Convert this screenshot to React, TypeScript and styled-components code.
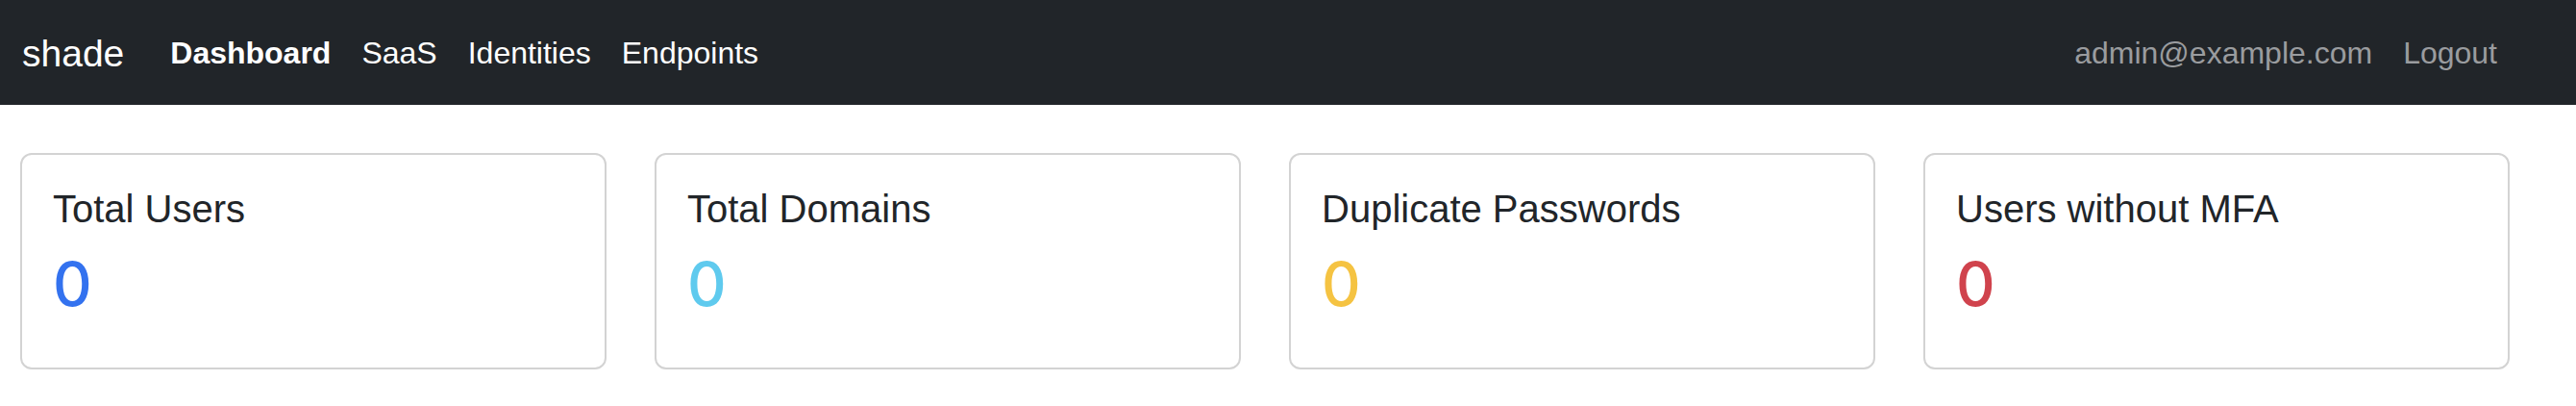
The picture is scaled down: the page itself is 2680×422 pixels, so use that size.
import React from "react";
import styled, { createGlobalStyle } from "styled-components";

const GlobalStyle = createGlobalStyle`
  html, body {
    margin: 0;
    padding: 0;
    background: #ffffff;
    font-family: "Liberation Sans", Arial, Helvetica, sans-serif;
    color: #212529;
  }
  * { box-sizing: border-box; }
`;

const NavBar = styled.nav`
  height: 109px;
  background: #212529;
  display: flex;
  align-items: center;
  padding: 0 66px 0 23px;
`;

const Brand = styled.a`
  font-size: 39px;
  line-height: 60px;
  color: #ffffff;
  text-decoration: none;
  margin-right: 32px;
  margin-top: 2px;
`;

const NavList = styled.div`
  display: flex;
  align-items: center;
`;

const NavLink = styled.a<{ $active?: boolean; $muted?: boolean }>`
  font-size: 32px;
  line-height: 48px;
  padding: 0 16px;
  text-decoration: none;
  font-weight: ${(p) => (p.$active ? 700 : 400)};
  color: ${(p) => (p.$muted ? "#9a9c9f" : "#ffffff")};
`;

const RightNav = styled(NavList)`
  margin-left: auto;
`;

const CardRow = styled.main`
  display: flex;
  gap: 50px;
  padding: 50px 0 0 21px;
`;

const Card = styled.section`
  width: 610px;
  border: 2px solid #d3d3d3;
  border-radius: 12px;
  padding: 32px;
  background: #ffffff;
`;

const CardTitle = styled.h5`
  margin: 0 0 16px;
  font-size: 40px;
  line-height: 48px;
  font-weight: 400;
  color: #212529;
`;

const CardValue = styled.h2<{ $color: string }>`
  margin: 0 0 16px;
  font-family: Inter, "Liberation Sans", sans-serif;
  font-size: 63px;
  line-height: 76.8px;
  font-weight: 500;
  color: ${(p) => p.$color};
`;

const stats = [
  { title: "Total Users", value: 0, color: "#3372ef" },
  { title: "Total Domains", value: 0, color: "#5fcaee" },
  { title: "Duplicate Passwords", value: 0, color: "#f5c342" },
  { title: "Users without MFA", value: 0, color: "#d0434d" },
];

export default function App() {
  return (
    <>
      <GlobalStyle />
      <NavBar>
        <Brand href="#">shade</Brand>
        <NavList>
          <NavLink href="#" $active>
            Dashboard
          </NavLink>
          <NavLink href="#">SaaS</NavLink>
          <NavLink href="#">Identities</NavLink>
          <NavLink href="#">Endpoints</NavLink>
        </NavList>
        <RightNav>
          <NavLink href="#" $muted>
            admin@example.com
          </NavLink>
          <NavLink href="#" $muted>
            Logout
          </NavLink>
        </RightNav>
      </NavBar>
      <CardRow>
        {stats.map((s) => (
          <Card key={s.title}>
            <CardTitle>{s.title}</CardTitle>
            <CardValue $color={s.color}>{s.value}</CardValue>
          </Card>
        ))}
      </CardRow>
    </>
  );
}
